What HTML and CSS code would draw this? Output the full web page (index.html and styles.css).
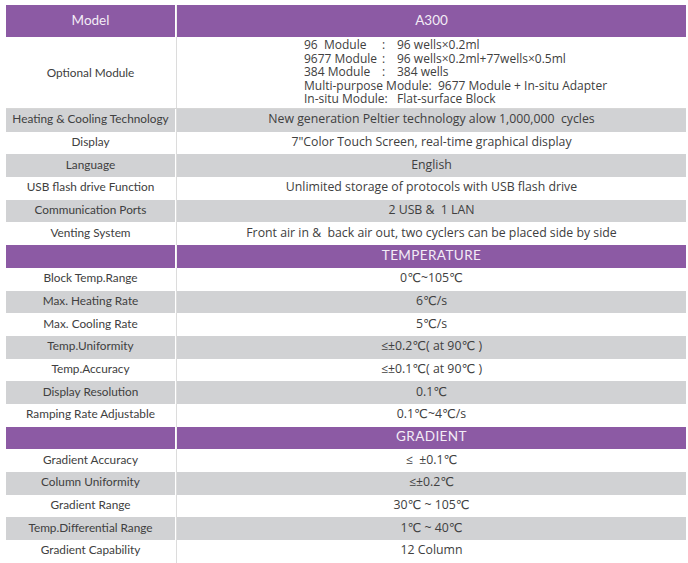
FILE: index.html
```html
<!DOCTYPE html>
<html>
<head>
<meta charset="utf-8">
<link rel="stylesheet" href="styles.css">
</head>
<body>
<div class="spec">
  <div class="row head top"><div class="k">Model</div><div class="v">A300</div></div>
  <div class="row tall"><div class="k">Optional Module</div><div class="v list">
    <div><span class="a">96&nbsp; Module</span><span class="c">:</span>96 wells×0.2ml</div>
    <div><span class="a">9677 Module</span><span class="c">:</span>96 wells×0.2ml+77wells×0.5ml</div>
    <div><span class="a">384 Module</span><span class="c">:</span>384 wells</div>
    <div>Multi-purpose Module:&nbsp; 9677 Module + In-situ Adapter</div>
    <div>In-situ Module:&nbsp;&nbsp; Flat-surface Block</div>
  </div></div>
  <div class="row g"><div class="k">Heating &amp; Cooling Technology</div><div class="v">New generation Peltier technology alow 1,000,000&nbsp; cycles</div></div>
  <div class="row"><div class="k">Display</div><div class="v">7"Color Touch Screen, real-time graphical display</div></div>
  <div class="row g"><div class="k">Language</div><div class="v">English</div></div>
  <div class="row"><div class="k">USB flash drive Function</div><div class="v">Unlimited storage of protocols with USB flash drive</div></div>
  <div class="row g"><div class="k">Communication Ports</div><div class="v">2 USB &amp;&nbsp; 1 LAN</div></div>
  <div class="row"><div class="k">Venting System</div><div class="v">Front air in &amp;&nbsp; back air out, two cyclers can be placed side by side</div></div>
  <div class="row head"><div class="k"></div><div class="v sec">TEMPERATURE</div></div>
  <div class="row"><div class="k">Block Temp.Range</div><div class="v">0℃~105℃</div></div>
  <div class="row g"><div class="k">Max. Heating Rate</div><div class="v">6℃/s</div></div>
  <div class="row"><div class="k">Max. Cooling Rate</div><div class="v">5℃/s</div></div>
  <div class="row g"><div class="k">Temp.Uniformity</div><div class="v">≤±0.2℃( at 90℃ )</div></div>
  <div class="row"><div class="k">Temp.Accuracy</div><div class="v">≤±0.1℃( at 90℃ )</div></div>
  <div class="row g"><div class="k">Display Resolution</div><div class="v">0.1℃</div></div>
  <div class="row"><div class="k">Ramping Rate Adjustable</div><div class="v">0.1℃~4℃/s</div></div>
  <div class="row head"><div class="k"></div><div class="v sec">GRADIENT</div></div>
  <div class="row"><div class="k">Gradient Accuracy</div><div class="v">≤&nbsp; ±0.1℃</div></div>
  <div class="row g"><div class="k">Column Uniformity</div><div class="v">≤±0.2℃</div></div>
  <div class="row"><div class="k">Gradient Range</div><div class="v">30℃ ~ 105℃</div></div>
  <div class="row g"><div class="k">Temp.Differential Range</div><div class="v">1℃ ~ 40℃</div></div>
  <div class="row"><div class="k">Gradient Capability</div><div class="v">12 Column</div></div>
</div>
</body>
</html>
```
FILE: styles.css
```css
html, body { margin: 0; padding: 0; background: #fff; }
body { padding: 5px 2px 0 6px; }
.spec { width: 680px; color: #404040; }
.row { display: flex; height: 22.7px; }
.row.g .k, .row.g .v { background: #d1d2d4; }
.k, .v { box-sizing: border-box; padding-bottom: 3px; }
.k {
  width: 170px;
  flex: none;
  border-right: 1px solid #fff;
  display: flex; align-items: center; justify-content: center;
  font-family: Lato, "Open Sans", sans-serif;
  font-size: 11.8px;
  white-space: nowrap;
}
.v {
  flex: 1;
  border-left: 1px solid #dcdcdc;
  display: flex; align-items: center; justify-content: center;
  font-family: "Open Sans", "DejaVu Sans", sans-serif;
  font-size: 12.3px;
  white-space: nowrap;
}
.row.head .k, .row.head .v { background: #8c5aa4; color: #f3ecf6; }
.row.head .v { border-left-color: #eee; }
.row.top { height: 32px; }
.row.top .k, .row.top .v { font-family: Lato, sans-serif; font-size: 13.5px; }
.sec { font-family: Lato, sans-serif !important; font-size: 13.5px !important; letter-spacing: 0.4px; }
.row.tall { height: 72px; border-bottom: 1px solid #d6d6d6; box-sizing: border-box; }
.row.tall .k, .row.tall .v { padding-bottom: 1px; }
.v.list {
  flex-direction: column; align-items: flex-start; justify-content: center;
  padding-left: 127px;
  font-size: 12px;
  line-height: 13.6px;
}
.a { display: inline-block; width: 78px; }
.c { display: inline-block; width: 15px; }
```
